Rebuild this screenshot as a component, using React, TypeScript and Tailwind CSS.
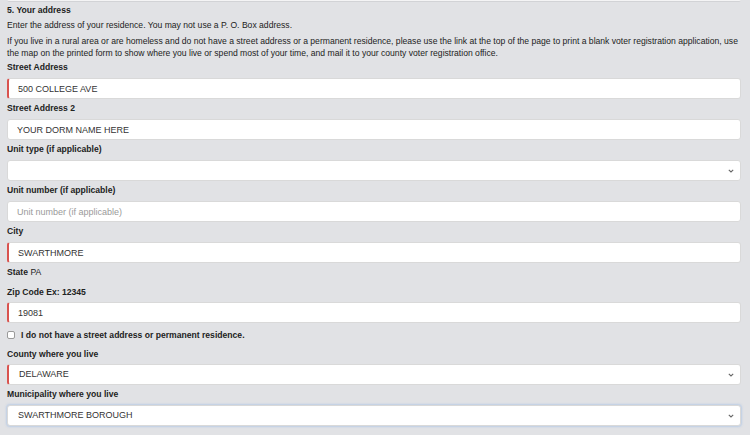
import React from 'react'
import clsx from 'clsx'

const font = "font-['Liberation_Sans',Arial,sans-serif]"

const inputBase =
  'block w-full h-[21px] bg-white border border-[#d9d9d9] rounded-[3px] text-[9px] text-[#333] outline-none placeholder:text-[#9a9a9a]'

const Chevron = () => (
  <svg
    className="pointer-events-none absolute right-[7px] top-1/2 -translate-y-1/2"
    width="6"
    height="4"
    viewBox="0 0 6 4"
  >
    <path d="M0.8 0.8 L3 3 L5.2 0.8" fill="none" stroke="#666" strokeWidth="1.1" />
  </svg>
)

type FieldProps = {
  label: string
  value?: string
  placeholder?: string
  required?: boolean
  select?: boolean
  focused?: boolean
  labelMt?: string
  inputMt?: string
}

const Field = ({ label, value, placeholder, required, select, focused, labelMt = 'mt-[3px]', inputMt = 'mt-[5px]' }: FieldProps) => {
  return (
    <div>
      <div className={clsx(labelMt, 'leading-[12px] font-bold')}>{label}</div>
      <div className={clsx(inputMt, 'relative')}>
        {select ? (
          <>
            <select
              defaultValue={value}
              className={clsx(
                inputBase,
                'appearance-none pl-[10px] pr-[20px]',
                required && 'border-l-2 border-l-[#d9534f]',
                focused && 'border-[#8db6e6] shadow-[0_0_2px_1px_rgba(120,170,230,0.35)]'
              )}
            >
              <option value={value}>{value}</option>
            </select>
            <Chevron />
          </>
        ) : (
          <input
            defaultValue={value}
            placeholder={placeholder}
            className={clsx(
              inputBase,
              'px-[9px]',
              required && 'border-l-2 border-l-[#d9534f]'
            )}
          />
        )}
      </div>
    </div>
  )
}

export default function App() {
  return (
    <div className={clsx('min-h-screen bg-[#e1e2e5] px-[7px] text-[8.6px] text-[#222]', font)}>
      <div className="w-[734px]">
        {/* tail of the previous section's input */}
        <div className="h-[2px] bg-[#f4f4f5] border-b border-[#d2d3d6] rounded-b-[2px]" />

        <div className="mt-[2px] leading-[12px] font-bold">5. Your address</div>
        <p className="mt-[3px] leading-[12px]">
          Enter the address of your residence. You may not use a P. O. Box address.
        </p>
        <p className="mt-[4px] leading-[12px]">
          If you live in a rural area or are homeless and do not have a street address or a permanent
          residence, please use the link at the top of the page to print a blank voter registration
          application, use the map on the printed form to show where you live or spend most of your
          time, and mail it to your county voter registration office.
        </p>

        <Field label="Street Address" value="500 COLLEGE AVE" required labelMt="mt-[2px]" />
        <Field label="Street Address 2" value="YOUR DORM NAME HERE" />
        <Field label="Unit type (if applicable)" value="" select />
        <Field label="Unit number (if applicable)" placeholder="Unit number (if applicable)" />
        <Field label="City" value="SWARTHMORE" required />

        <div className="mt-[3px] leading-[12px]">
          <span className="font-bold">State</span> PA
        </div>

        <Field label="Zip Code Ex: 12345" value="19081" required labelMt="mt-[8px]" inputMt="mt-[4px]" />

        <label className="mt-[6px] flex items-center h-[12px] font-bold">
          <span className="w-[8px] h-[8px] bg-white border border-[#9a9a9a] rounded-[2px]" />
          <span className="ml-[6px]">I do not have a street address or permanent residence.</span>
        </label>

        <Field label="County where you live" value="DELAWARE" required select labelMt="mt-[7px]" inputMt="mt-[4px]" />
        <Field label="Municipality where you live" value="SWARTHMORE BOROUGH" select focused />
      </div>
    </div>
  )
}
